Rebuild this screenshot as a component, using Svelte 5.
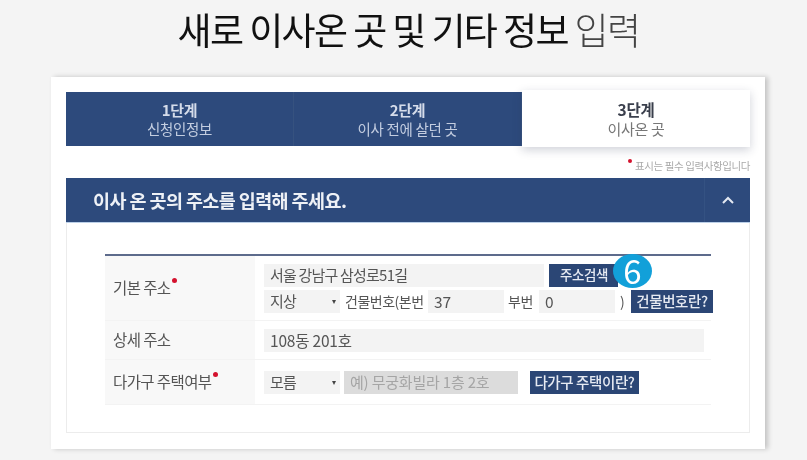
<script lang="ts">
	const steps = [
		{ title: '1단계', desc: '신청인정보' },
		{ title: '2단계', desc: '이사 전에 살던 곳' },
		{ title: '3단계', desc: '이사온 곳', active: true }
	];
</script>

<div class="page">
	<h1 class="headline">새로 이사온 곳 및 기타 정보 <span class="light">입력</span></h1>

	<main class="card">
		<nav class="steps">
			{#each steps as step}
				<div class="step" class:active={step.active}>
					<strong>{step.title}</strong>
					<span>{step.desc}</span>
				</div>
			{/each}
		</nav>

		<p class="note"><i class="dot"></i>표시는 필수 입력사항입니다</p>

		<section class="panel">
			<header class="panel-head">
				<h2>이사 온 곳의 주소를 입력해 주세요.</h2>
				<div class="toggle">
					<svg width="14" height="9" viewBox="0 0 14 9" fill="none" stroke="#e4e9f2" stroke-width="2"><polyline points="2 7 7 2 12 7" /></svg>
				</div>
			</header>

			<div class="form">
				<div class="row row-main">
					<div class="label">기본 주소<i class="dot"></i></div>
					<div class="fields">
						<div class="line">
							<div class="input addr">서울 강남구 삼성로51길</div>
							<button class="btn search">주소검색</button>
							<span class="badge">6</span>
						</div>
						<div class="line">
							<div class="input select">지상<em>▾</em></div>
							<span class="txt bld-no">건물번호(본번</span>
							<div class="input num">37</div>
							<span class="txt sub-no">부번</span>
							<div class="input num">0</div>
							<span class="txt paren">)</span>
							<button class="btn what">건물번호란?</button>
						</div>
					</div>
				</div>
				<div class="row row-detail">
					<div class="label">상세 주소</div>
					<div class="fields">
						<div class="input wide">108동 201호</div>
					</div>
				</div>
				<div class="row row-multi">
					<div class="label">다가구 주택여부<i class="dot"></i></div>
					<div class="fields">
						<div class="line">
							<div class="input select">모름<em>▾</em></div>
							<div class="input holder">예) 무궁화빌라 1층 2호</div>
							<button class="btn multi">다가구 주택이란?</button>
						</div>
					</div>
				</div>
			</div>
		</section>
	</main>
</div>

<style>
	:global(body) {
		margin: 0;
		background: #f4f4f4;
	}

	.page {
		width: 807px;
		height: 460px;
		overflow: hidden;
		font-family: 'Noto Sans CJK KR', 'Noto Sans', sans-serif;
		color: #4a4a4a;
		filter: blur(0.4px);
	}

	.headline {
		margin: 0;
		height: 77px;
		padding: 6px 0 0 10px;
		box-sizing: border-box;
		text-align: center;
		font-size: 37px;
		line-height: 46px;
		font-weight: 400;
		letter-spacing: -1.6px;
		color: #111;
	}

	.light {
		font-weight: 300;
		color: #444;
	}

	.card {
		width: 684px;
		height: 342px;
		margin-left: 51px;
		padding: 15px;
		background: #fff;
		box-shadow: 3px 0 5px rgba(0, 0, 0, 0.2);
	}

	.steps {
		display: grid;
		grid-template-columns: repeat(3, 228px);
		height: 54px;
	}

	.step {
		display: flex;
		flex-direction: column;
		align-items: center;
		justify-content: center;
		background: #2d4a7c;
		color: #c3cde0;
		font-size: 14.5px;
		line-height: 19px;
		border-right: 1px solid #36527f;
		letter-spacing: -0.3px;
	}

	.step strong {
		font-weight: 700;
		color: #d5dcea;
		font-size: 15px;
	}

	.step.active {
		background: #fff;
		color: #777;
		border-right: 0;
		margin: -2px 0 -1px;
		box-shadow: 0 3px 9px rgba(40, 50, 80, 0.22);
		font-size: 15px;
		z-index: 1;
	}

	.step.active strong {
		color: #3a3f4c;
		font-size: 15.5px;
	}

	.note {
		margin: 0;
		height: 32px;
		padding-top: 13px;
		box-sizing: border-box;
		text-align: right;
		font-size: 10.5px;
		line-height: 14px;
		letter-spacing: -0.4px;
		color: #aaa;
	}

	.note .dot {
		top: -7px;
		margin: 0 3px 0 0;
		width: 4px;
		height: 4px;
	}

	.dot {
		position: relative;
		top: -7px;
		display: inline-block;
		width: 5px;
		height: 5px;
		margin-left: 1px;
		border-radius: 50%;
		background: #d4122e;
	}

	.panel {
		height: 255px;
		box-sizing: border-box;
		border: 1px solid #ececec;
		border-top: 0;
	}

	.panel-head {
		display: flex;
		justify-content: space-between;
		margin: 0 -1px;
		height: 45px;
		background: #2d4a7c;
		border-bottom: 1px solid #bcd0e8;
		box-sizing: border-box;
	}

	.panel-head h2 {
		margin: 0;
		padding-left: 27px;
		font-size: 18.5px;
		line-height: 45px;
		font-weight: 700;
		letter-spacing: -0.6px;
		color: #eef1f6;
	}

	.toggle {
		width: 45px;
		display: flex;
		align-items: center;
		justify-content: center;
		border-left: 1px solid #345282;
	}

	.form {
		margin: 31px 38px 0;
		width: 606px;
		border-top: 2px solid #5d6b8c;
	}

	.row {
		display: grid;
		grid-template-columns: 150px 1fr;
		border-bottom: 1px solid #f3f3f3;
	}

	.row-main {
		height: 64px;
	}

	.row-detail {
		height: 38px;
	}

	.row-multi {
		height: 44px;
	}

	.label {
		padding: 0 0 2px 8px;
		box-sizing: border-box;
		display: flex;
		align-items: center;
		background: #f8f8f8;
		font-size: 15.5px;
		letter-spacing: -0.6px;
		color: #555;
	}

	.fields {
		padding-left: 9px;
		display: flex;
		flex-direction: column;
		justify-content: center;
		gap: 3px;
	}

	.line {
		display: flex;
		align-items: center;
		height: 23px;
		position: relative;
	}

	.input {
		height: 23px;
		box-sizing: border-box;
		padding-left: 6px;
		background: #f3f3f3;
		font-size: 15px;
		line-height: 22px;
		letter-spacing: -0.8px;
		color: #555;
	}

	.addr {
		width: 280px;
	}

	.select {
		width: 76px;
		display: flex;
		justify-content: space-between;
	}

	.select em {
		font-style: normal;
		font-size: 8px;
		padding-right: 5px;
		color: #444;
	}

	.num {
		width: 76px;
		letter-spacing: 0;
		font-size: 15.5px;
	}

	.wide {
		width: 440px;
		letter-spacing: -0.2px;
		font-size: 15.5px;
	}

	.holder {
		width: 174px;
		margin-left: 4px;
		background: #dcdcdc;
		color: #a5a5a5;
		letter-spacing: -0.2px;
	}

	.txt {
		font-size: 14px;
		letter-spacing: -0.5px;
		color: #555;
	}

	.bld-no {
		width: 88px;
		padding-left: 5px;
		box-sizing: border-box;
	}

	.sub-no {
		width: 35px;
		padding-left: 4px;
		box-sizing: border-box;
	}

	.paren {
		width: 16px;
		padding-left: 5px;
		box-sizing: border-box;
	}

	.btn {
		height: 23px;
		padding: 0 0 1px;
		border: 0;
		background: #2b4675;
		color: #e6eaf2;
		font: inherit;
		font-size: 14.5px;
		font-weight: 500;
		letter-spacing: -0.4px;
		white-space: nowrap;
	}

	.search {
		width: 69px;
		margin-left: 5px;
		padding: 0 0 2px 11px;
		text-align: left;
		font-size: 13.5px;
	}

	.what {
		width: 82px;
	}

	.multi {
		width: 109px;
		margin-left: 12px;
	}

	.badge {
		position: absolute;
		left: 349px;
		top: -10px;
		width: 39px;
		height: 34px;
		border-radius: 50%;
		background: #12a0d9;
		color: #fff;
		font-size: 33px;
		line-height: 33px;
		text-align: center;
		font-weight: 400;
	}
</style>
